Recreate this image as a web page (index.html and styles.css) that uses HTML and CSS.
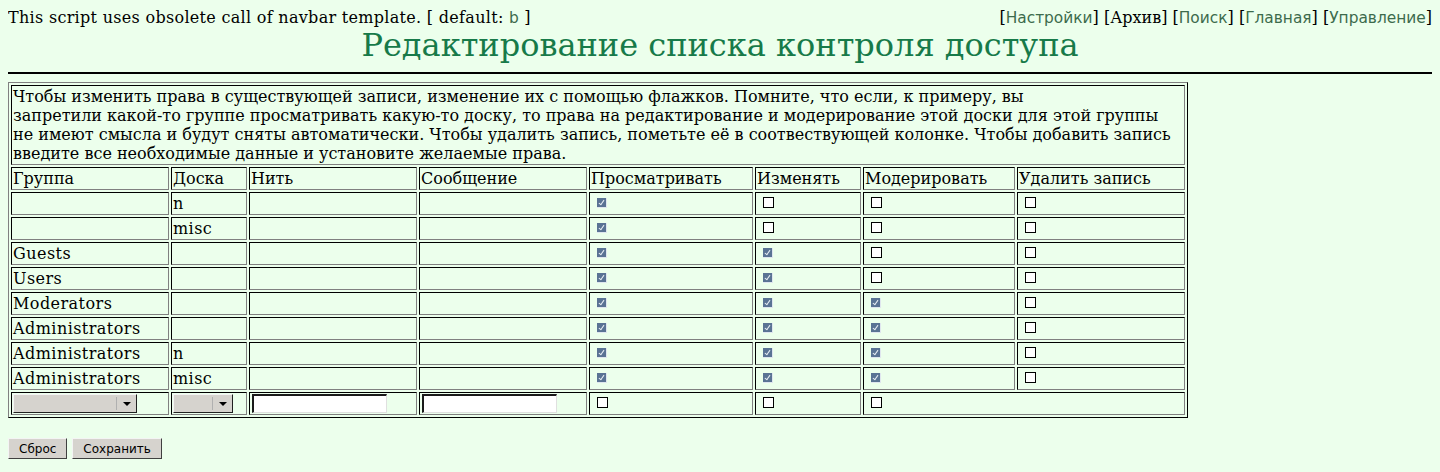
FILE: index.html
```html
<!DOCTYPE html>
<html lang="ru">
<head>
<meta charset="utf-8">
<title>Редактирование списка контроля доступа</title>
<link rel="stylesheet" href="styles.css">
</head>
<body>
<div class="topbar">
  <div class="notice">This script uses obsolete call of navbar template. [ default: <a class="lnk" href="#">b</a> ]</div>
  <div class="nav">[<a class="lnk" href="#">Настройки</a>] [Архив] [<a class="lnk" href="#">Поиск</a>] [<a class="lnk" href="#">Главная</a>] [<a class="lnk" href="#">Управление</a>]</div>
</div>
<h1 class="title">Редактирование списка контроля доступа</h1>
<hr class="rule">
<form class="aclform">
<table class="acl">
  <colgroup>
    <col class="c1"><col class="c2"><col class="c3"><col class="c4"><col class="c5"><col class="c6"><col class="c7"><col class="c8">
  </colgroup>
  <tr><td colspan="8" class="info">Чтобы изменить права в существующей записи, изменение их с помощью флажков. Помните, что если, к примеру, вы<br>запретили какой-то группе просматривать какую-то доску, то права на редактирование и модерирование этой доски для этой группы не имеют смысла и будут сняты автоматически. Чтобы удалить запись, пометьте её в соотвествующей колонке. Чтобы добавить запись введите все необходимые данные и установите желаемые права.</td></tr>
  <tr><td>Группа</td><td>Доска</td><td>Нить</td><td>Сообщение</td><td>Просматривать</td><td>Изменять</td><td>Модерировать</td><td>Удалить запись</td></tr>
  <tr><td></td><td class="lat">n</td><td></td><td></td><td><span class="cb on"></span></td><td><span class="cb"></span></td><td><span class="cb"></span></td><td><span class="cb"></span></td></tr>
  <tr><td></td><td class="lat">misc</td><td></td><td></td><td><span class="cb on"></span></td><td><span class="cb"></span></td><td><span class="cb"></span></td><td><span class="cb"></span></td></tr>
  <tr><td class="lat">Guests</td><td></td><td></td><td></td><td><span class="cb on"></span></td><td><span class="cb on"></span></td><td><span class="cb"></span></td><td><span class="cb"></span></td></tr>
  <tr><td class="lat">Users</td><td></td><td></td><td></td><td><span class="cb on"></span></td><td><span class="cb on"></span></td><td><span class="cb"></span></td><td><span class="cb"></span></td></tr>
  <tr><td class="lat">Moderators</td><td></td><td></td><td></td><td><span class="cb on"></span></td><td><span class="cb on"></span></td><td><span class="cb on"></span></td><td><span class="cb"></span></td></tr>
  <tr><td class="lat">Administrators</td><td></td><td></td><td></td><td><span class="cb on"></span></td><td><span class="cb on"></span></td><td><span class="cb on"></span></td><td><span class="cb"></span></td></tr>
  <tr><td class="lat">Administrators</td><td class="lat">n</td><td></td><td></td><td><span class="cb on"></span></td><td><span class="cb on"></span></td><td><span class="cb on"></span></td><td><span class="cb"></span></td></tr>
  <tr><td class="lat">Administrators</td><td class="lat">misc</td><td></td><td></td><td><span class="cb on"></span></td><td><span class="cb on"></span></td><td><span class="cb on"></span></td><td><span class="cb"></span></td></tr>
  <tr>
    <td><span class="sel sel-wide"><span class="sel-body"></span><span class="sel-btn"><svg width="8" height="4" viewBox="0 0 8 4"><path d="M0 0H8L4 4Z" fill="#000"/></svg></span></span></td>
    <td><span class="sel sel-narrow"><span class="sel-body"></span><span class="sel-btn"><svg width="8" height="4" viewBox="0 0 8 4"><path d="M0 0H8L4 4Z" fill="#000"/></svg></span></span></td>
    <td><input class="txt" type="text"></td>
    <td><input class="txt" type="text"></td>
    <td><span class="cb"></span></td>
    <td><span class="cb"></span></td>
    <td colspan="2"><span class="cb"></span></td>
  </tr>
</table>
<div class="buttons">
  <button type="reset" class="btn">Сброс</button>
  <button type="button" class="btn">Сохранить</button>
</div>
</form>
</body>
</html>
```
FILE: styles.css
```css
html, body {
  background: #ecffec;
}
body {
  margin: 8px;
  font-family: "DejaVu Serif", serif;
  font-size: 16px;
  color: #000;
}
.topbar {
  display: flex;
  justify-content: space-between;
  line-height: 19px;
  height: 19px;
}
.notice {
  letter-spacing: 0.3px;
}
.nav {
  letter-spacing: 0;
}
.lnk {
  font-family: "DejaVu Sans", sans-serif;
  font-size: 15.4px;
  line-height: 1;
  color: #3d6b4c;
  text-decoration: none;
  letter-spacing: 0;
}
.title {
  margin: 0;
  text-align: center;
  font-size: 32px;
  font-weight: normal;
  color: #177a49;
  line-height: 37px;
}
.rule {
  margin: 8px 0;
  border: 0;
  height: 2px;
  background: #000;
}
.aclform {
  margin: 0;
}
.acl {
  table-layout: fixed;
  width: 1180px;
  border-collapse: separate;
  border-spacing: 2px;
  border: 1px solid;
  border-color: #808080 #000 #000 #808080;
}
.c1 { width: 158px; }
.c2 { width: 76px; }
.c3 { width: 168px; }
.c4 { width: 168px; }
.c5 { width: 164px; }
.c6 { width: 106px; }
.c7 { width: 152px; }
.c8 { width: 168px; }
.acl td {
  box-sizing: border-box;
  border: 1px solid;
  border-color: #000 #808080 #808080 #000;
  padding: 1px;
  height: 23px;
  line-height: 19px;
  vertical-align: top;
  white-space: nowrap;
  overflow: hidden;
}
.acl td.info {
  white-space: normal;
  height: 80px;
}
.acl td.lat {
  letter-spacing: 0.45px;
}
.cb {
  display: inline-block;
  box-sizing: border-box;
  width: 11px;
  height: 11px;
  margin: 3px 0 0 6px;
  border: 1px solid #000;
  background: #fff;
  vertical-align: top;
  position: relative;
}
.cb.on {
  width: 10px;
  height: 10px;
  margin-top: 4px;
  border: 0;
  background: #5a7394;
  border-right: 1px solid #dfe6ee;
  border-bottom: 1px solid #dfe6ee;
}
.cb.on::after {
  content: "";
  position: absolute;
  left: 3px;
  top: 1px;
  width: 2px;
  height: 5px;
  border: solid #e8eef4;
  border-width: 0 1px 1px 0;
  transform: rotate(35deg);
}
.sel {
  display: inline-flex;
  box-sizing: border-box;
  height: 19px;
  margin: 0;
  background: #d6d3ce;
  border: 1px solid;
  border-color: #f4f4f4 #202020 #202020 #f4f4f4;
  vertical-align: top;
}
.sel-wide { width: 124px; }
.sel-narrow { width: 60px; }
.sel-body {
  flex: 1;
}
.sel-btn {
  display: flex;
  align-items: center;
  justify-content: center;
  width: 19px;
  border-left: 1px solid #b0b0b0;
  margin: 2px 0;
}
.txt {
  box-sizing: border-box;
  width: 135px;
  height: 19px;
  margin: 0 0 0 1px;
  padding: 0 2px;
  border-style: solid;
  border-color: #1a1a1a #e0e0e0 #e0e0e0 #1a1a1a;
  border-width: 2px 1px 1px 2px;
  background: #fff;
  vertical-align: top;
  font-size: 13px;
}
.buttons {
  margin-top: 20px;
  display: flex;
  gap: 5px;
}
.btn {
  box-sizing: border-box;
  height: 21px;
  padding: 0 10px;
  font-family: "DejaVu Sans", sans-serif;
  font-size: 12px;
  color: #000;
  background: #d6d3ce;
  border: 1px solid;
  border-color: #f4f4f4 #404040 #404040 #f4f4f4;
  border-radius: 0;
}
```
